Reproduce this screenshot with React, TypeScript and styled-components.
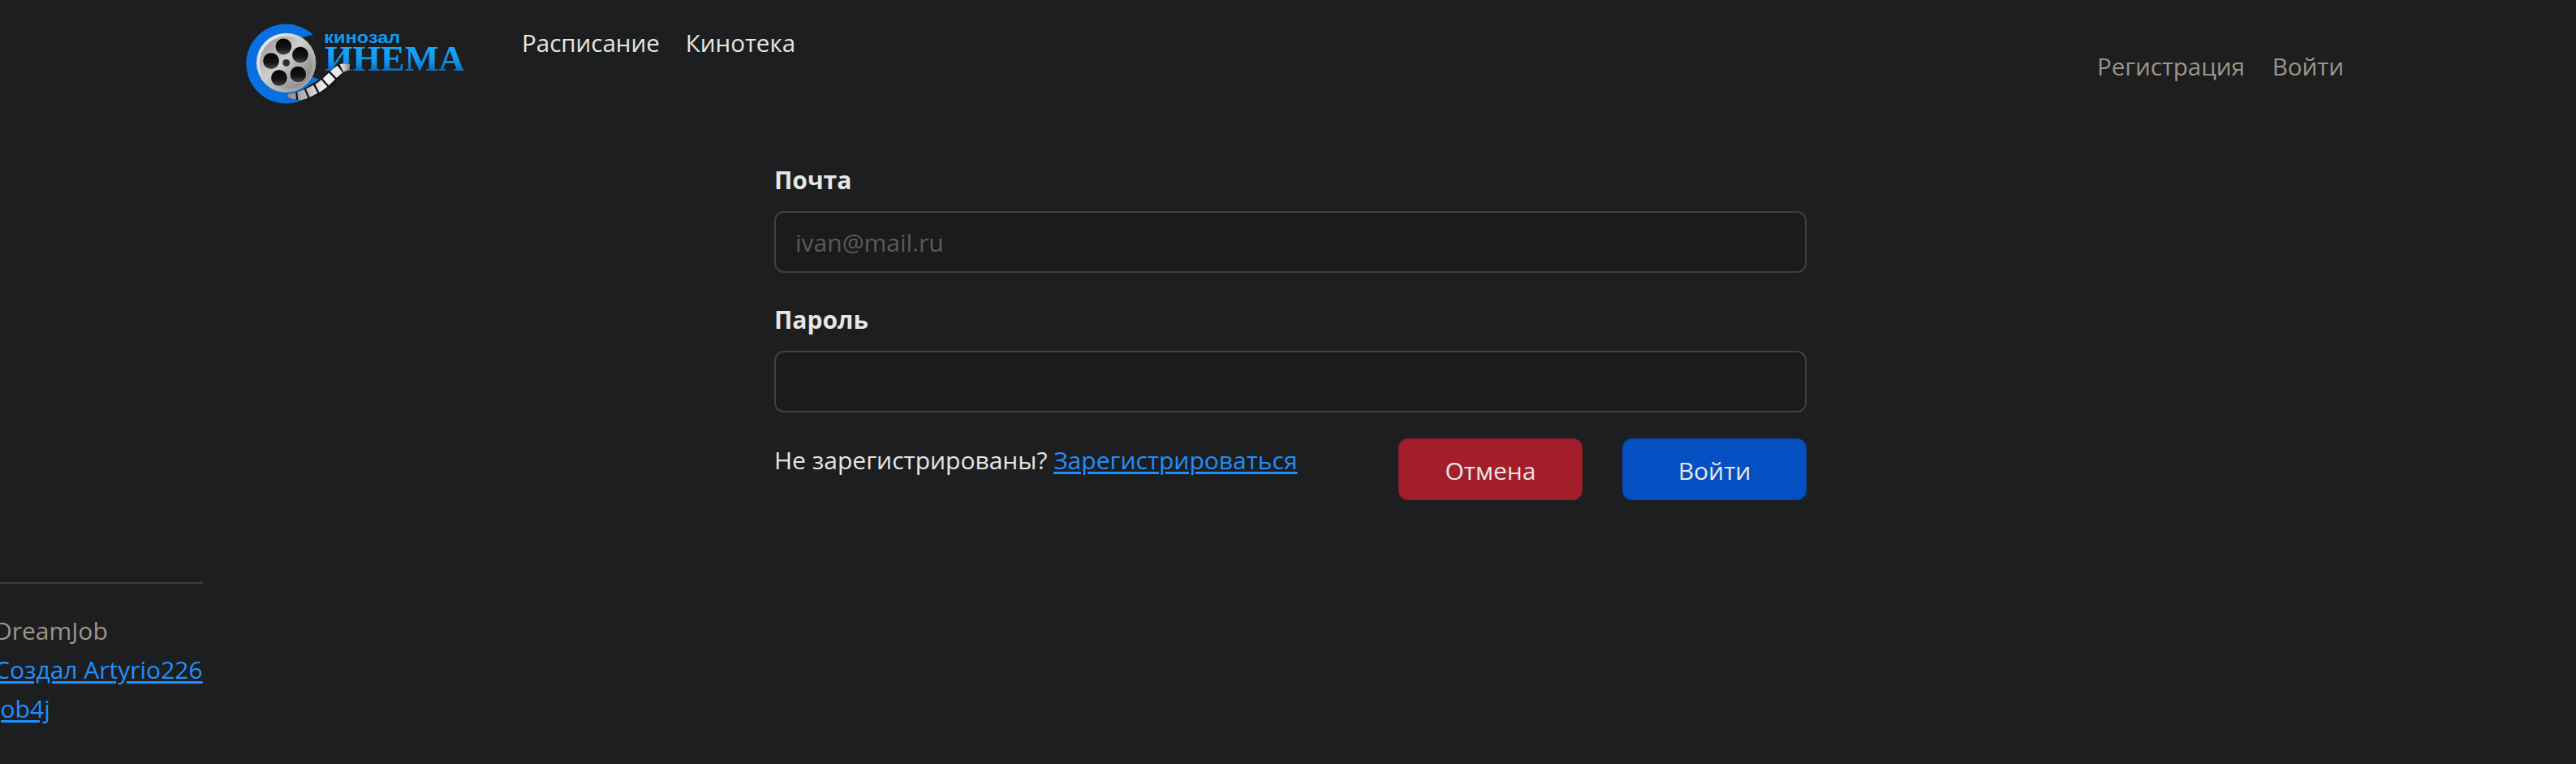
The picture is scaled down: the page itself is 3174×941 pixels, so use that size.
// App.tsx
import React from 'react';
import styled, { createGlobalStyle } from 'styled-components';

const GlobalStyle = createGlobalStyle`
  html, body {
    margin: 0;
    padding: 0;
    height: 100%;
    background: #1c1e20;
    overflow: hidden;
  }
  body {
    font-family: "Open Sans", "Noto Sans", sans-serif;
    font-size: 30px;
    line-height: 48px;
    color: #e8e6e3;
  }
  * {
    box-sizing: border-box;
  }
`;

const Page = styled.div`
  display: flex;
  flex-direction: column;
  width: 3174px;
  height: 941px;
`;

const Header = styled.header`
  display: flex;
  align-items: flex-start;
  height: 196px;
  padding-right: 286px;
  font-size: 29.5px;
`;

const LogoBox = styled.div`
  margin: 10px 0 0 280px;
  width: 320px;
  height: 130px;
`;

const MainNav = styled.nav`
  display: flex;
  gap: 32px;
  margin: 29px 0 0 43px;
`;

const AuthNav = styled.nav`
  display: flex;
  gap: 34px;
  margin: 58px 0 0 auto;
`;

const NavLink = styled.a<{ $muted?: boolean }>`
  color: ${(p) => (p.$muted ? '#9e9589' : '#e8e6e3')};
  text-decoration: none;
`;

const Form = styled.form`
  display: flex;
  flex-direction: column;
  gap: 32px;
  width: 1272px;
  margin-left: 954px;
`;

const Field = styled.div`
  display: flex;
  flex-direction: column;
  gap: 15px;
`;

const Label = styled.label`
  padding-top: 2px;
  font-weight: 700;
  line-height: 47px;
`;

const Input = styled.input`
  height: 76px;
  padding: 0 24px;
  font: inherit;
  color: #e8e6e3;
  background: #191b1d;
  border: 2px solid #3c4144;
  border-radius: 12px;
  outline: none;

  &::placeholder {
    color: #5f5a52;
    opacity: 1;
  }
`;

const FormFooter = styled.div`
  display: flex;
  align-items: flex-start;
  justify-content: space-between;
`;

const Hint = styled.div`
  margin-top: 3px;
`;

const Link = styled.a`
  color: #2090ff;
  text-decoration: underline;
  text-underline-offset: 3px;
  white-space: nowrap;
`;

const Actions = styled.div`
  display: flex;
  gap: 49px;
`;

const Button = styled.button<{ $variant: 'danger' | 'primary' }>`
  width: 227px;
  height: 76px;
  padding: 4px 0 0;
  font: inherit;
  color: #e8e6e3;
  background: ${(p) => (p.$variant === 'danger' ? '#a41d2b' : '#0450c3')};
  border: 2px solid ${(p) => (p.$variant === 'danger' ? '#981c29' : '#044bb6')};
  border-radius: 12px;
`;

const Footer = styled.footer`
  display: flex;
  flex-direction: column;
  width: 257px;
  margin: 101px 0 0 -7px;
`;

const Rule = styled.hr`
  width: 100%;
  height: 2px;
  margin: 0 0 34px;
  background: #3a3c3e;
  border: 0;
`;

const Muted = styled.div`
  color: #9e9589;
`;

const reelHoles = [
  [208, 142],
  [270, 173],
  [262, 245],
  [192, 258],
  [162, 195],
];

const Logo: React.FC = () => (
  <svg width="320" height="130" viewBox="0 0 960 390" fill="none">
    <defs>
      <linearGradient id="cinemaText" gradientUnits="userSpaceOnUse" x1="0" y1="145" x2="0" y2="232">
        <stop offset="0" stopColor="#1aa6fa" />
        <stop offset="0.6" stopColor="#1196ee" />
        <stop offset="1" stopColor="#0b6cba" />
      </linearGradient>
      <linearGradient id="reelRim" x1="0" y1="0" x2="1" y2="1">
        <stop offset="0" stopColor="#f4f4f4" />
        <stop offset="0.5" stopColor="#c9c9c9" />
        <stop offset="1" stopColor="#8b8b8b" />
      </linearGradient>
      <linearGradient id="reelDisc" x1="0" y1="0" x2="1" y2="1">
        <stop offset="0" stopColor="#8f8f8f" />
        <stop offset="0.45" stopColor="#cfcfcf" />
        <stop offset="1" stopColor="#6f6f6f" />
      </linearGradient>
      <linearGradient id="reelHole" x1="0" y1="0" x2="0" y2="1">
        <stop offset="0" stopColor="#050505" />
        <stop offset="0.6" stopColor="#141414" />
        <stop offset="1" stopColor="#4a4a4a" />
      </linearGradient>
      <linearGradient id="filmFrames" gradientUnits="userSpaceOnUse" x1="225" y1="0" x2="460" y2="0">
        <stop offset="0" stopColor="#8d8d8d" />
        <stop offset="0.3" stopColor="#bdbdbd" />
        <stop offset="0.6" stopColor="#f2f2f2" />
        <stop offset="0.85" stopColor="#e2e2e2" />
        <stop offset="1" stopColor="#6b6b6b" />
      </linearGradient>
      <clipPath id="filmClip">
        <path d="M220 315 C265 322 300 285 330 270 C360 255 385 225 415 208 C430 203 445 205 460 208 L460 225 C440 230 425 245 410 265 C380 300 340 325 300 335 C270 342 245 340 225 330 Z" />
      </clipPath>
    </defs>
    <path d="M317 98 A147 147 0 1 0 300 327 L345 265 L300 250 L270 110 Z" fill="#0a6fe0" />
    <text x="358" y="128" fontFamily="Liberation Sans, sans-serif" fontWeight="700" fontSize="63" fill="#129bf0" textLength="282" lengthAdjust="spacingAndGlyphs">
      кинозал
    </text>
    <text x="360" y="232" fontFamily="Liberation Serif, serif" fontWeight="700" fontSize="132" fill="url(#cinemaText)" textLength="518" lengthAdjust="spacingAndGlyphs">
      ИНЕМА
    </text>
    <circle cx="218" cy="202" r="110" fill="url(#reelRim)" />
    <circle cx="218" cy="202" r="98" fill="url(#reelDisc)" />
    {reelHoles.map(([cx, cy]) => (
      <circle key={cx} cx={cx} cy={cy} r="31" fill="url(#reelHole)" stroke="#e2e2e2" strokeWidth="2" />
    ))}
    <circle cx="218" cy="202" r="13" fill="#2b2e30" />
    <path
      d="M220 315 C265 322 300 285 330 270 C360 255 385 225 415 208 C430 203 445 205 460 208 L460 225 C440 230 425 245 410 265 C380 300 340 325 300 335 C270 342 245 340 225 330 Z"
      fill="#141414"
    />
    <g clipPath="url(#filmClip)">
      <path
        d="M222 322 C270 335 300 312 340 292 C370 272 395 240 420 222 C435 214 448 214 460 216"
        stroke="url(#filmFrames)"
        strokeWidth="34"
        strokeDasharray="32 7"
      />
    </g>
  </svg>
);

const App: React.FC = () => {
  return (
    <>
      <GlobalStyle />
      <Page>
        <Header>
          <LogoBox>
            <Logo />
          </LogoBox>
          <MainNav>
            <NavLink href="#">Расписание</NavLink>
            <NavLink href="#">Кинотека</NavLink>
          </MainNav>
          <AuthNav>
            <NavLink $muted href="#">Регистрация</NavLink>
            <NavLink $muted href="#">Войти</NavLink>
          </AuthNav>
        </Header>

        <Form onSubmit={(e) => e.preventDefault()}>
          <Field>
            <Label htmlFor="email">Почта</Label>
            <Input id="email" type="text" placeholder="ivan@mail.ru" />
          </Field>
          <Field>
            <Label htmlFor="password">Пароль</Label>
            <Input id="password" type="password" />
          </Field>
          <FormFooter>
            <Hint>
              Не зарегистрированы? <Link href="#">Зарегистрироваться</Link>
            </Hint>
            <Actions>
              <Button $variant="danger" type="button">Отмена</Button>
              <Button $variant="primary" type="submit">Войти</Button>
            </Actions>
          </FormFooter>
        </Form>

        <Footer>
          <Rule />
          <Muted>DreamJob</Muted>
          <Link href="#">Создал Artyrio226</Link>
          <Link href="#">job4j</Link>
        </Footer>
      </Page>
    </>
  );
};

export default App;
